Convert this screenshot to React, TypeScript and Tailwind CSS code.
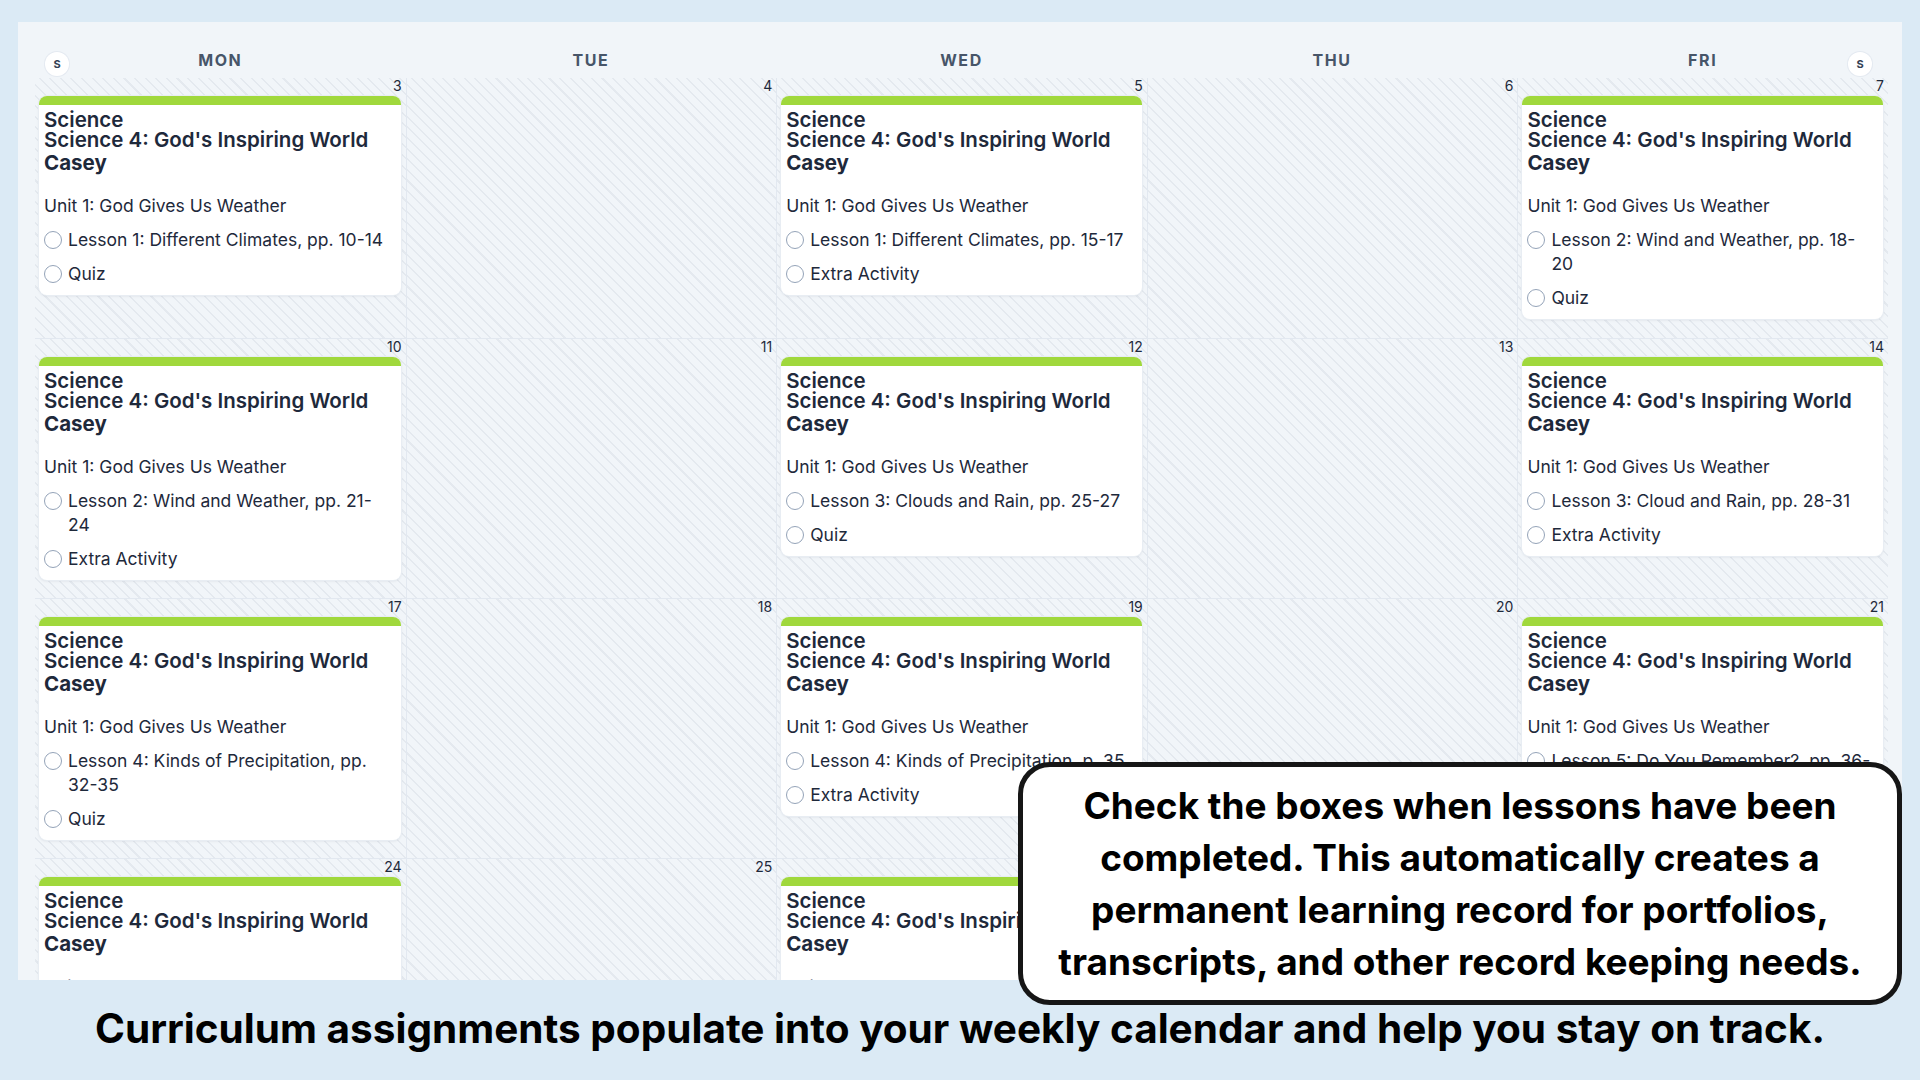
import React from 'react';

type Entry = { unit: string; items: string[] };
type Day = { date: number; entry?: Entry };

const DAYS = ['MON', 'TUE', 'WED', 'THU', 'FRI'];
const UNIT = 'Unit 1: God Gives Us Weather';

// zero-width space after a page-range hyphen so "18-20" can wrap like the planner does
const range = (s: string) => s.replace(/(\d)-(\d)/g, '$1-\u200B$2');

const WEEKS: Day[][] = [
  [
    { date: 3, entry: { unit: UNIT, items: ['Lesson 1: Different Climates, pp. 10-14', 'Quiz'] } },
    { date: 4 },
    { date: 5, entry: { unit: UNIT, items: ['Lesson 1: Different Climates, pp. 15-17', 'Extra Activity'] } },
    { date: 6 },
    { date: 7, entry: { unit: UNIT, items: ['Lesson 2: Wind and Weather, pp. 18-20', 'Quiz'] } },
  ],
  [
    { date: 10, entry: { unit: UNIT, items: ['Lesson 2: Wind and Weather, pp. 21-24', 'Extra Activity'] } },
    { date: 11 },
    { date: 12, entry: { unit: UNIT, items: ['Lesson 3: Clouds and Rain, pp. 25-27', 'Quiz'] } },
    { date: 13 },
    { date: 14, entry: { unit: UNIT, items: ['Lesson 3: Cloud and Rain, pp. 28-31', 'Extra Activity'] } },
  ],
  [
    { date: 17, entry: { unit: UNIT, items: ['Lesson 4: Kinds of Precipitation, pp. 32-35', 'Quiz'] } },
    { date: 18 },
    { date: 19, entry: { unit: UNIT, items: ['Lesson 4: Kinds of Precipitation, p. 35', 'Extra Activity'] } },
    { date: 20 },
    { date: 21, entry: { unit: UNIT, items: ['Lesson 5: Do You Remember?, pp. 36-37', 'Quiz'] } },
  ],
  [
    { date: 24, entry: { unit: 'Unit 2: God Made the Seasons', items: ['Lesson 6: Spring and Summer, pp. 38-41', 'Quiz'] } },
    { date: 25 },
    { date: 26, entry: { unit: 'Unit 2: God Made the Seasons', items: ['Lesson 6: Spring and Summer, pp. 42-44', 'Extra Activity'] } },
    { date: 27 },
    { date: 28, entry: { unit: 'Unit 2: God Made the Seasons', items: ['Lesson 7: Fall and Winter, pp. 45-48', 'Quiz'] } },
  ],
];

const WeekendToggle = () => (
  <span className="w-[24px] h-[24px] mt-[2px] rounded-full bg-white shadow-[0_0_0_1px_rgba(226,232,240,0.9)] flex items-center justify-center text-[11px] font-bold text-[#334155]">
    S
  </span>
);

const AssignmentCard = ({ entry }: { entry: Entry }) => (
  <div className="rounded-[8px] bg-white overflow-hidden shadow-[0_1px_3px_rgba(15,23,42,0.10)] ring-1 ring-[#e8edf3]">
    <div className="h-[9px] bg-[#a0d83c]" />
    <div className="pl-[5px] pr-[12px] pt-[5px] pb-[9px] text-[#1e293b]">
      <div className="text-[20.5px] leading-[20px] font-semibold">
        <div>Science</div>
        <div className="whitespace-nowrap">Science 4: God's Inspiring World</div>
        <div className="mt-[3px] font-bold">Casey</div>
      </div>
      <div className="mt-[21px] flex flex-col gap-[10px] text-[17.5px] leading-[24px]">
        <div>{entry.unit}</div>
        {entry.items.map(item => (
          <label key={item} className="flex items-start gap-[6px]">
            <span className="mt-[3px] w-[18px] h-[18px] shrink-0 rounded-full border-[1.5px] border-[#94a3b8] bg-white" />
            <span>{range(item)}</span>
          </label>
        ))}
      </div>
    </div>
  </div>
);

export default function App() {
  return (
    <div className="relative w-[1920px] h-[1080px] overflow-hidden bg-[#dbeaf5] flex flex-col font-['Inter',sans-serif]">
      {/* Weekly planner */}
      <div className="mt-[22px] ml-[18px] w-[1884px] h-[958px] shrink-0 overflow-hidden bg-[#f1f5f9] pl-[17px] pr-[14px]">
        <div className="grid grid-cols-5 h-[56px] pt-[28px]">
          {DAYS.map((d, i) => (
            <div key={d} className="grid grid-cols-[1fr_auto_1fr] items-start">
              <div className="pl-[10px] flex">{i === 0 && <WeekendToggle />}</div>
              <div className="text-[16px] leading-[20px] font-bold tracking-[0.1em] text-[#475569]">{d}</div>
              <div className="pr-[16px] flex justify-end">{i === 4 && <WeekendToggle />}</div>
            </div>
          ))}
        </div>

        {WEEKS.map((week, w) => (
          <div key={w} className={`grid grid-cols-5 h-[260px] ${w > 0 ? 'border-t border-[#e2e8f0]' : ''}`}>
            {week.map((day, i) => (
              <div
                key={day.date}
                className={`pl-[4px] pr-[4px] [background-image:repeating-linear-gradient(45deg,transparent_0px,transparent_6px,#e4e9ef_6px,#e4e9ef_7.5px)] ${i > 0 ? 'border-l border-[#e2e8f0]' : ''}`}
              >
                <div className="h-[18px] text-right text-[14px] leading-[16px] text-[#1e293b]">{day.date}</div>
                {day.entry && (
                  <div className="mr-[1px]">
                    <AssignmentCard entry={day.entry} />
                  </div>
                )}
              </div>
            ))}
          </div>
        ))}
      </div>

      <p className="flex-1 flex items-center justify-center text-[40.5px] font-bold text-black pb-[2px]">
        Curriculum assignments populate into your weekly calendar and help you stay on track.
      </p>

      {/* Callout laid over the calendar */}
      <div className="absolute left-[1018px] top-[762px] w-[884px] h-[243px] rounded-[32px] border-[5px] border-[#161616] bg-white flex items-center justify-center text-center text-[37px] leading-[52px] font-bold text-black">
        <p>
          Check the boxes when lessons have been
          <br />
          completed. This automatically creates a
          <br />
          permanent learning record for portfolios,
          <br />
          transcripts, and other record keeping needs.
        </p>
      </div>
    </div>
  );
}
